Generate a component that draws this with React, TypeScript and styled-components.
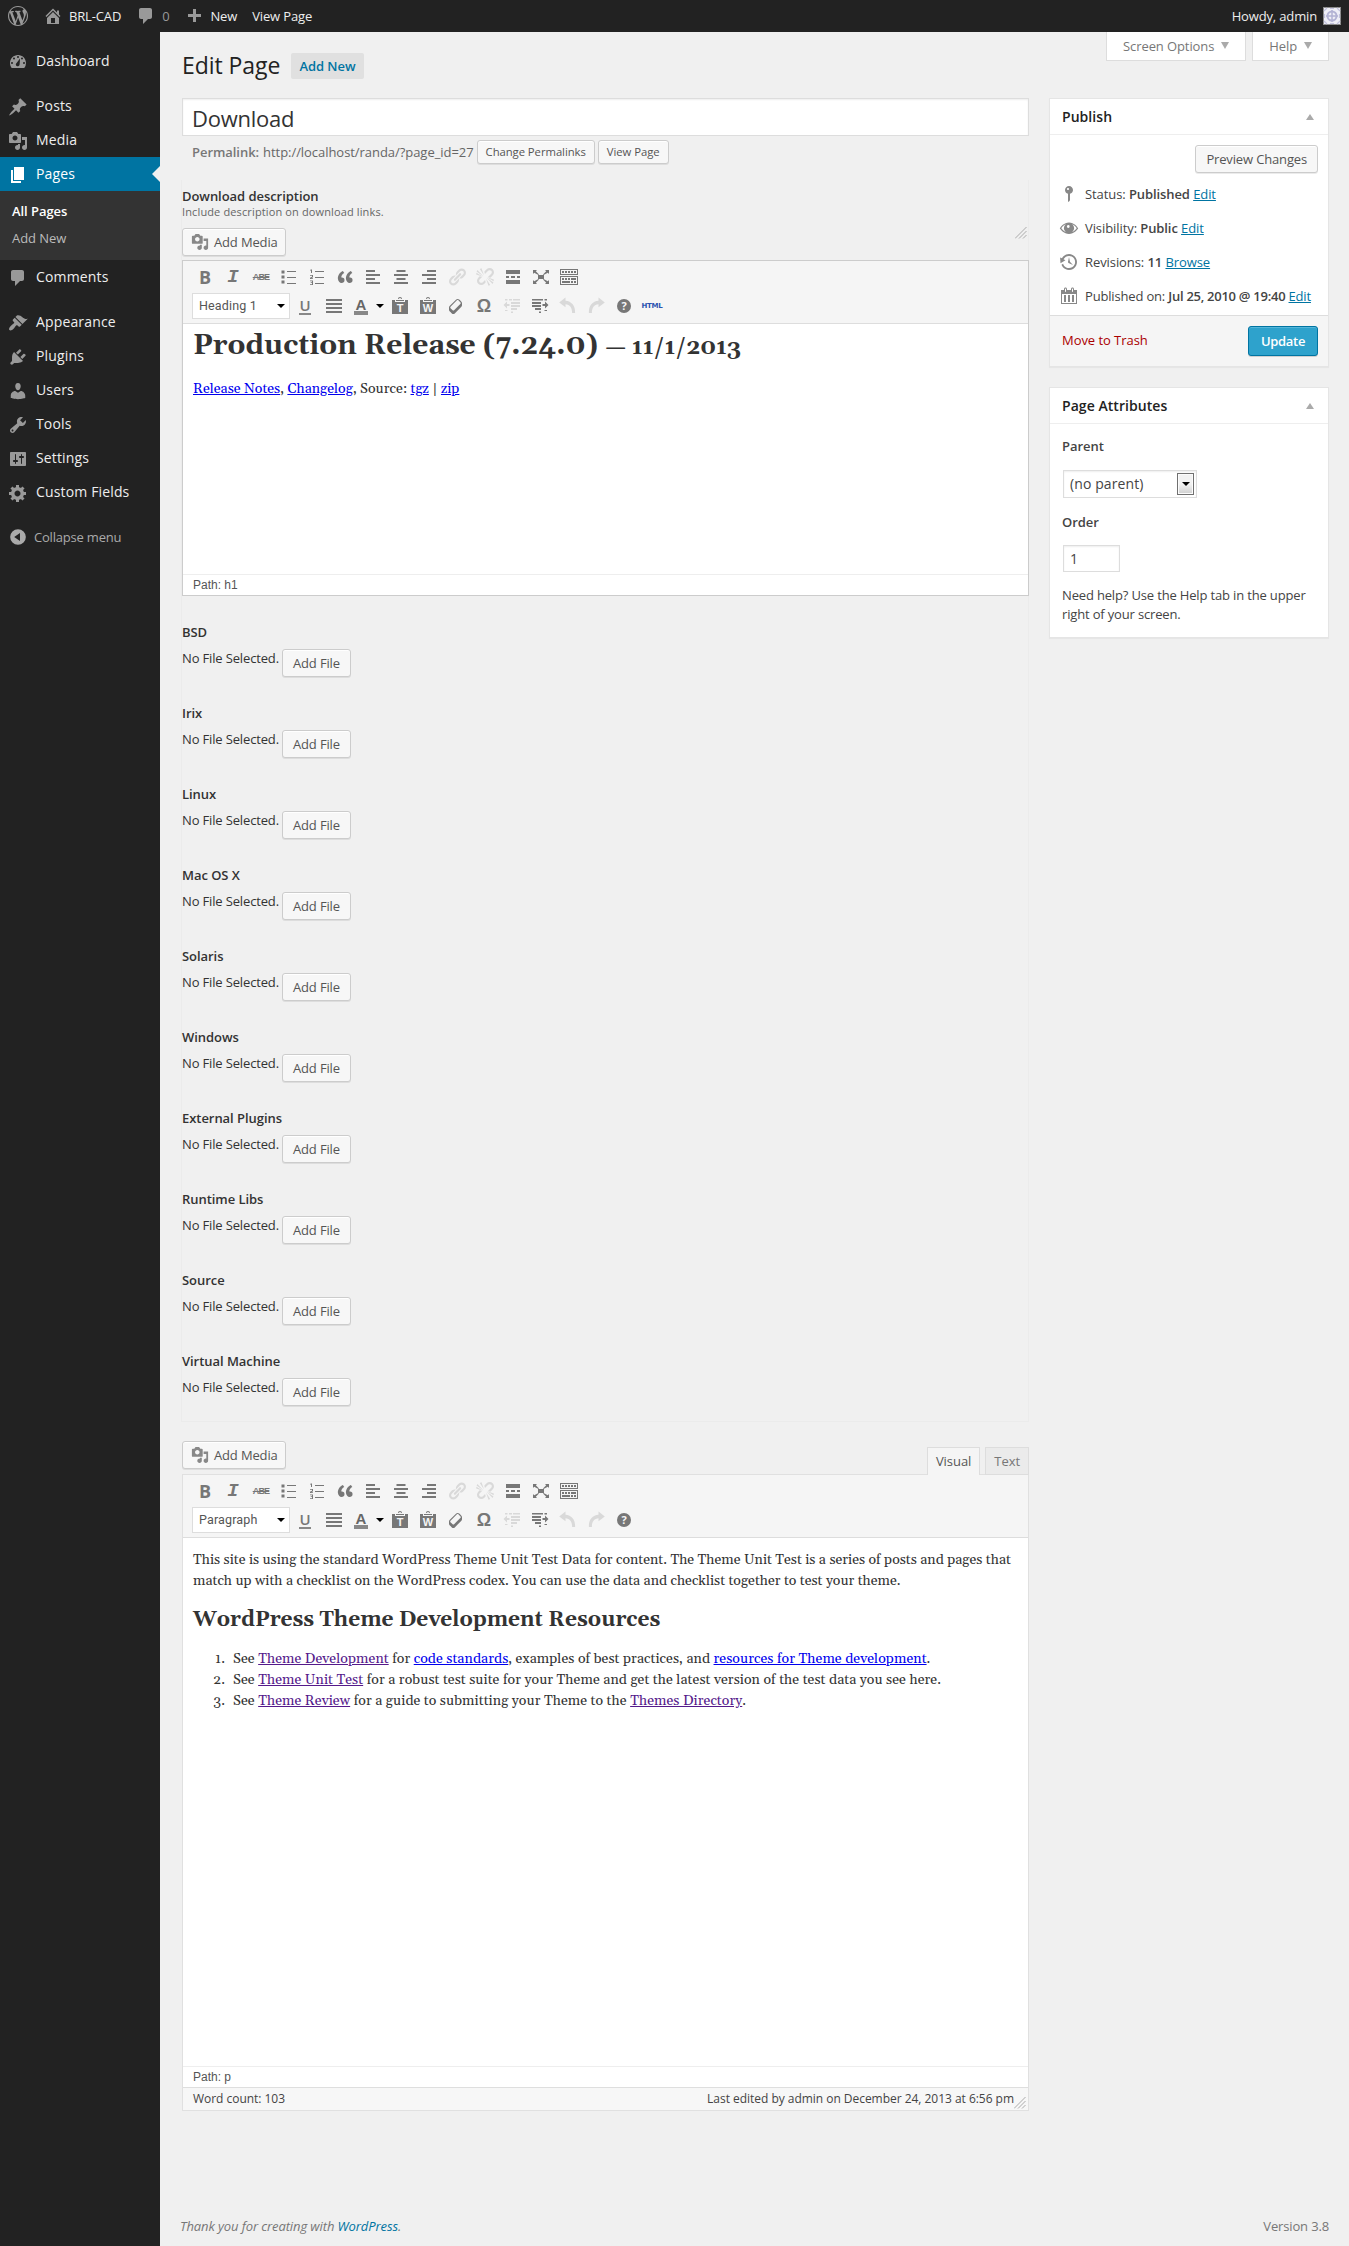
import React from 'react';
import styled, { createGlobalStyle, css } from 'styled-components';

const Global = createGlobalStyle`
  * { box-sizing: border-box; }
  body {
    margin: 0;
    background: #f0f0f0;
    color: #444;
    font: 13px/18px "Open Sans", sans-serif;
    letter-spacing: -0.05px;
  }
  h1, h2, h3, p, ul, ol { margin: 0; padding: 0; font-weight: normal; }
  ul, ol { list-style: none; }
`;

/* ---------- icons ---------- */

const PATHS = {
  wordpress:
    'M20 10c0-5.51-4.49-10-10-10C4.48 0 0 4.49 0 10c0 5.52 4.48 10 10 10 5.51 0 10-4.48 10-10zM7.78 15.37L4.37 6.22c.55-.02 1.17-.08 1.17-.08.5-.06.44-1.13-.06-1.11 0 0-1.45.11-2.37.11-.18 0-.37 0-.58-.01C4.12 2.69 6.87 1.11 10 1.11c2.33 0 4.45.87 6.05 2.34-.68-.11-1.65.39-1.65 1.58 0 .74.45 1.36.9 2.1.35.61.55 1.36.55 2.46 0 1.49-1.4 5-1.4 5l-3.03-8.37c.54-.02.82-.17.82-.17.5-.05.44-1.25-.06-1.22 0 0-1.44.12-2.38.12-.87 0-2.33-.12-2.33-.12-.5-.03-.56 1.2-.06 1.22l.92.08 1.26 3.41zM17.41 10c.24-.64.74-1.87.43-4.25.7 1.29 1.05 2.71 1.05 4.25 0 3.29-1.73 6.24-4.4 7.78.97-2.59 1.94-5.2 2.92-7.78zM6.1 18.09C3.12 16.65 1.11 13.53 1.11 10c0-1.3.23-2.48.72-3.59C3.25 10.3 4.67 14.2 6.1 18.09zm4.03-6.63l2.58 6.98c-.86.29-1.76.45-2.71.45-.79 0-1.57-.11-2.29-.33.81-2.38 1.62-4.74 2.42-7.1z',
  home: 'M16 8.5l1.53 1.53-1.06 1.06L10 4.6l-6.47 6.49-1.06-1.06L10 2.5l4 4v-2h2v4zm-6-2.46l6 5.99V18H4v-5.97zM12 17v-5H8v5h4z',
  comments: 'M5 2h9c1.1 0 2 .9 2 2v7c0 1.1-.9 2-2 2h-2l-5 5v-5H5c-1.1 0-2-.9-2-2V4c0-1.1.9-2 2-2z',
  plus: 'M17 8v3h-5v5H9v-5H4V8h5V3h3v5z',
  dashboard:
    'M3.76 16h12.48A8 8 0 0 0 18 11.01C18 6.59 14.42 3 10 3S2 6.59 2 11.01C2 12.91 2.66 14.66 3.76 16zM10 4a1 1 0 1 1 0 2 1 1 0 0 1 0-2zM6 5.500a1 1 0 1 1 0 2 1 1 0 0 1 0-2zm8 0a1 1 0 1 1 0 2 1 1 0 0 1 0-2zM4 10a1 1 0 1 1 0 2 1 1 0 0 1 0-2zm12 0a1 1 0 1 1 0 2 1 1 0 0 1 0-2zm-4-3.500s-.2 5.200-.4 6.100a1.900 1.900 0 1 1-3-1.700z',
  post: 'M10.44 3.02l1.82-1.82 6.36 6.35-1.83 1.82c-1.05-.68-2.48-.57-3.41.36l-.75.75c-.92.93-1.04 2.35-.35 3.41l-1.83 1.82-2.41-2.41-2.8 2.79c-.42.42-3.38 2.71-3.8 2.29s1.86-3.39 2.28-3.81l2.79-2.79L4.1 9.36l1.83-1.82c1.05.69 2.48.57 3.4-.36l.75-.75c.93-.92 1.05-2.35.36-3.41z',
  media:
    'M13 11V4c0-.55-.45-1-1-1h-1.670L9 1H5L3.670 3H2c-.55 0-1 .45-1 1v7c0 .55.45 1 1 1h10c.55 0 1-.45 1-1zM7 4.500c1.380 0 2.500 1.120 2.500 2.500S8.380 9.500 7 9.500 4.500 8.380 4.500 7 5.620 4.500 7 4.500zM14 6h5v10.500c0 1.380-1.120 2.500-2.500 2.500S14 17.880 14 16.500s1.120-2.500 2.500-2.500c.17 0 .34.02.5.05V9h-3V6zm-4 8.050V13h2v3.500c0 1.380-1.120 2.500-2.500 2.500S7 17.880 7 16.500 8.120 14 9.500 14c.17 0 .34.02.5.05z',
  page: 'M6 15V2h10v13H6zm-1 1h8v2H3V5h2v11z',
  appearance:
    'M14.48 11.06L7.41 3.99l1.5-1.5c.5-.56 2.3-.47 3.51.32 1.21.8 1.43 1.28 2.91 2.1 1.18.64 2.45 1.26 4.45.85zm-.71.71L6.7 4.7 4.93 6.47c-.39.39-.39 1.02 0 1.41l1.06 1.06c.39.39.39 1.03 0 1.42-.6.6-1.43 1.11-2.21 1.69-.35.26-.7.53-1.01.84C1.43 14.23.4 16.08 1.4 17.07c.99 1 2.84-.03 4.18-1.36.31-.31.58-.66.85-1.02.57-.78 1.08-1.61 1.69-2.21.39-.39 1.02-.39 1.41 0l1.06 1.06c.39.39 1.02.39 1.41 0z',
  plugins:
    'M13.11 4.36L9.87 7.6 8 5.73l3.24-3.24c.35-.34 1.05-.2 1.56.32.52.51.66 1.21.31 1.55zm-8 1.77l.91-1.12 9.01 9.01-1.19.84c-.71.71-2.63 1.16-3.82 1.16H6.14L4.9 17.26c-.59.59-1.54.59-2.12 0-.59-.58-.59-1.53 0-2.12l1.24-1.24v-3.88c0-1.13.4-3.19 1.09-3.89zm7.26 3.97l3.24-3.24c.34-.35 1.04-.21 1.55.31.52.51.66 1.21.31 1.55l-3.24 3.25z',
  users:
    'M10 9.250c-2.270 0-2.730-3.440-2.730-3.440C7 4.020 7.820 2 9.970 2c2.160 0 2.980 2.020 2.710 3.810 0 0-.41 3.440-2.680 3.440zm0 2.570L12.720 10c2.390 0 4.520 2.330 4.520 4.530v2.490s-3.650 1.130-7.240 1.130c-3.650 0-7.240-1.130-7.240-1.130v-2.490c0-2.250 1.940-4.480 4.470-4.480z',
  tools:
    'M16.68 9.77c-1.34 1.34-3.3 1.67-4.95.99l-5.41 6.52c-.99.99-2.59.99-3.58 0s-.99-2.59 0-3.57l6.52-5.42c-.68-1.65-.35-3.61.99-4.95 1.28-1.28 3.12-1.62 4.72-1.06l-2.89 2.89 2.82 2.82 2.86-2.87c.53 1.58.18 3.39-1.08 4.65zM3.81 16.21c.4.39 1.04.39 1.43 0 .4-.4.4-1.04 0-1.43-.39-.4-1.03-.4-1.43 0-.39.39-.39 1.03 0 1.43z',
  settings:
    'M18 16V4c0-.55-.45-1-1-1H3c-.55 0-1 .45-1 1v12c0 .55.45 1 1 1h14c.55 0 1-.45 1-1zM8 11h1c.55 0 1 .45 1 1s-.45 1-1 1H8v1.5c0 .28-.22.5-.5.5s-.5-.22-.5-.5V13H6c-.55 0-1-.45-1-1s.45-1 1-1h1V5.5c0-.28.22-.5.5-.5s.5.22.5.5V11zm5-2h-1c-.55 0-1-.45-1-1s.45-1 1-1h1V5.5c0-.28.22-.5.5-.5s.5.22.5.5V7h1c.55 0 1 .45 1 1s-.45 1-1 1h-1v5.5c0 .28-.22.5-.5.5s-.5-.22-.5-.5V9z',
  generic:
    'M18 12h-2.18c-.17.7-.44 1.35-.81 1.93l1.54 1.54-2.1 2.1-1.54-1.54c-.58.36-1.23.63-1.91.79V19H8v-2.180c-.68-.16-1.330-.43-1.910-.79l-1.540 1.540-2.120-2.120 1.540-1.540c-.36-.58-.63-1.230-.79-1.910H1V9.030h2.170c.16-.7.44-1.350.8-1.940L2.430 5.550l2.100-2.100 1.540 1.540c.58-.37 1.240-.64 1.930-.81V2h3v2.180c.68.16 1.330.43 1.910.79l1.540-1.540 2.120 2.120-1.540 1.540c.36.59.64 1.240.8 1.940H18V12zm-8.500 1.500c1.660 0 3-1.340 3-3s-1.340-3-3-3-3 1.340-3 3 1.340 3 3 3z',
  collapse: 'M10 2.160a7.840 7.840 0 1 1 0 15.680 7.840 7.840 0 0 1 0-15.680zm2 11.720V6.120L6.180 9.970z',
  status:
    'M14 6c0 1.860-1.280 3.410-3 3.860V16c0 1-2 2-2 2V9.860c-1.720-.45-3-2-3-3.860 0-2.210 1.790-4 4-4s4 1.790 4 4zM8 5c0 .55.45 1 1 1s1-.45 1-1-.45-1-1-1-1 .45-1 1z',
  visibility:
    'M10 4.400c5 0 8.300 4.400 9.200 5.800-.9 1.400-4.200 5.800-9.200 5.800S1.700 11.600.8 10.200C1.700 8.800 5 4.400 10 4.400zm-3.200 1.900C4.700 7.200 3.200 8.900 2.300 10.200c.9 1.300 2.400 3 4.500 3.900a4.900 4.900 0 0 1 0-7.800zm6.400 0a4.900 4.900 0 0 1 0 7.800c2.100-.9 3.600-2.600 4.500-3.900-.9-1.300-2.400-3-4.500-3.900zM9.200 7.100a1.400 1.400 0 1 0 .1 2.800 1.400 1.400 0 0 0-.1-2.800z',
  backup:
    'M13.65 2.88c3.93 2.01 5.48 6.84 3.47 10.77s-6.83 5.48-10.77 3.47c-1.87-.96-3.2-2.56-3.86-4.4l1.64-1.03c.45 1.57 1.52 2.95 3.08 3.76 3.01 1.54 6.69.35 8.23-2.66 1.55-3.01.36-6.69-2.65-8.24C9.78 3.01 6.1 4.2 4.56 7.21l1.88.97-4.95 3.08-.39-5.82 1.78.91C4.9 2.4 9.75.89 13.65 2.88zm-4.36 7.83C9.11 10.53 9 10.28 9 10c0-.07.03-.12.04-.19h-.01L10 5l.97 4.81L14 13l-4.500-2.120.02-.02c-.08-.04-.16-.09-.23-.15z',
  calendar:
    'M15 4h3v14H2V4h3V3c0-.83.67-1.5 1.5-1.500S8 2.170 8 3v1h4V3c0-.83.67-1.500 1.500-1.500S15 2.170 15 3v1zM6 3v2.500c0 .28.22.5.5.5s.5-.22.5-.5V3c0-.28-.22-.5-.5-.5S6 2.720 6 3zm7 0v2.500c0 .28.22.5.5.5s.5-.22.5-.5V3c0-.28-.22-.5-.5-.5s-.5.22-.5.5zm4 14V8H3v9h14zM7 16V9H5v7h2zm4 0V9H9v7h2zm4 0V9h-2v7h2z',
  bullets: 'M2.500 3.500h3v3h-3zM2.500 8.500h3v3h-3zM2.500 13.500h3v3h-3zM8 4h9v1H8zM8 10h9v1H8zM8 16h9v1H8z',
  numbers:
    'M8 4h9v1H8zM8 10h9v1H8zM8 16h9v1H8zM4 2.500h1V6H4V3.500H3V3zM3 8h3v2.300L4.300 11.200H6v.8H3v-1.300l2-1V8.800H3zM3 13.500h3V18H3v-.8h2v-1.100H3.700v-.8H5v-1H3z',
  quote:
    'M9.490 13.220c0-.74-.2-1.380-.61-1.900-.62-.78-1.830-.88-2.530-.72-.29-1.650 1.110-3.750 2.920-4.650L7.880 4c-2.730 1.300-5.420 4.280-4.960 8.050C3.210 14.430 4.590 16 6.540 16c.85 0 1.560-.25 2.120-.75s.83-1.180.83-2.030zm8.050 0c0-.74-.2-1.380-.61-1.900-.63-.78-1.830-.88-2.530-.72-.29-1.650 1.110-3.750 2.920-4.650L15.930 4c-2.730 1.300-5.410 4.280-4.950 8.050.29 2.380 1.660 3.950 3.610 3.950.85 0 1.560-.25 2.120-.75s.83-1.180.83-2.030z',
  left: 'M3 3h9v2H3zM3 7h14v2H3zM3 11h9v2H3zM3 15h14v2H3z',
  center: 'M5.500 3h9v2h-9zM3 7h14v2H3zM5.500 11h9v2h-9zM3 15h14v2H3z',
  right: 'M8 3h9v2H8zM3 7h14v2H3zM8 11h9v2H8zM3 15h14v2H3z',
  justify: 'M2 3h16v2H2zM2 7h16v2H2zM2 11h16v2H2zM2 15h16v2H2z',
  link: 'M17.74 2.76c1.68 1.69 1.68 4.41 0 6.1l-1.53 1.52c-1.12 1.12-2.7 1.47-4.14 1.09l2.62-2.61.76-.77.76-.76c.84-.84.84-2.2 0-3.04-.84-.85-2.2-.85-3.04 0l-.77.76-3.38 3.38c-.37-1.44-.02-3.02 1.1-4.14l1.52-1.53c1.69-1.68 4.42-1.68 6.1 0zM8.59 13.43l5.34-5.34c.42-.42.42-1.1 0-1.52-.44-.43-1.13-.39-1.53 0l-5.33 5.34c-.42.42-.42 1.1 0 1.52.44.43 1.13.39 1.52 0zm-.76 2.29l4.14-4.15c.38 1.44.03 3.02-1.09 4.14l-1.52 1.53c-1.69 1.68-4.41 1.68-6.1 0-1.68-1.68-1.68-4.42 0-6.1l1.53-1.52c1.12-1.12 2.7-1.47 4.14-1.1l-4.14 4.15c-.85.84-.85 2.2 0 3.05.84.84 2.2.84 3.04 0z',
  unlink:
    'M17.74 2.26c1.68 1.69 1.68 4.41 0 6.1l-1.53 1.52c-.32.33-.69.58-1.08.77L13 10l1.69-1.64.76-.77.76-.76c.84-.84.84-2.2 0-3.04-.84-.85-2.2-.85-3.04 0l-.77.76-.76.76L10 7l-.65-2.14c.19-.38.44-.75.77-1.07l1.52-1.53c1.69-1.68 4.42-1.68 6.1 0zM1.600 4.600l.8-1.500L8.500 9.500zM4.800 2.100l1.700-.9L9 8.500zM1.200 7.500l.2-1.800L8 9.800zM9.360 13.690L10 13l.74 2.35-1.38 1.39c-1.69 1.68-4.41 1.68-6.1 0-1.68-1.68-1.68-4.42 0-6.1l1.39-1.38L7 10l-.69.64-1.52 1.53c-.85.84-.85 2.2 0 3.04.84.85 2.2.85 3.04 0zM18.400 15.400l-.8 1.500L11.500 10.500zM15.200 17.900l-1.700.9L11 11.500zM18.800 12.500l-.2 1.800L12 10.200z',
  more: 'M17 7V3H3v4h14zM6 11V9H3v2h3zm6 0V9H8v2h4zm5 0V9h-3v2h3zm0 6v-4H3v4h14z',
  expand:
    'M7 8h6v4H7zM2 13v4h4l-1.200-1.200L8 12.600 7.400 12l-4.200 2.200zM14 17h4v-4l-1.200 1.200L12.600 12l-.6.6 3.200 3.200zM14 3l1.200 1.200L12 7.400l.6.6 4.200-2.200L18 7V3zM6 3H2v4l1.200-1.200L7.400 8l.6-.6-3.200-3.200z',
  kitchen:
    'M19 2v6H1V2h18zm-1 5V3H2v4h16zM5 4v2H3V4h2zm3 0v2H6V4h2zm3 0v2H9V4h2zm3 0v2h-2V4h2zm3 0v2h-2V4h2zm2 5v9H1V9h18zm-1 8v-7H2v7h16zM5 11v2H3v-2h2zm3 0v2H6v-2h2zm3 0v2H9v-2h2zm6 0v2h-5v-2h5zm-6 3v2H3v-2h8zm3 0v2h-2v-2h2zm3 0v2h-2v-2h2z',
  clipboard: 'M9 3h-3v2h8V3h-3a1 1 0 0 0-2 0zM8 3a2 2 0 0 1 4 0h2v1H6V3zM2 4h3v2h10V4h3v14H2z',
  eraser:
    'M14.29 4.59l1.1 1.11c.41.4.61.94.61 1.47v2.12c0 .53-.2 1.07-.61 1.47l-6.63 6.63c-.4.41-.94.61-1.47.61s-1.07-.2-1.47-.61l-1.11-1.1-1.1-1.11c-.41-.4-.61-.94-.61-1.47v-2.12c0-.54.2-1.07.61-1.48l6.63-6.62c.4-.41.94-.61 1.47-.61s1.06.2 1.47.61zm-6.21 9.7l6.42-6.42c.39-.39.39-1.03 0-1.43L12.36 4.3c-.19-.19-.45-.29-.72-.29s-.52.1-.71.29l-6.42 6.42c-.39.4-.39 1.04 0 1.43l2.14 2.14c.38.38 1.04.38 1.43 0z',
  outdent: 'M1.500 9L5 5.500v2.500h2.500v2H5v2.500zM7 3h3v1.500H7zM11 3h7v1.500h-7zM9 6h9v2H9zM9 9h9v2H9zM9 12h6v2H9zM3 3h2.500v1.500H3zM3 14h2.500v1H3zM9 15.500h2V17H9z',
  indent: 'M18.500 9L15 5.500v2.500h-2.500v2H15v2.500zM2 3h11v1.500H2zM2 6h9v2H2zM2 9h9v2H2zM5 12h6v2H5zM14.500 3h2.500v1.500h-2.500zM14.500 14h2.500v1h-2.500zM9 15.500h2V17H9z',
  undo: 'M7.500 1.500v3.200c6 .4 10 5 9.600 12.300h-3c.1-5.400-2.300-8.500-6.600-8.800v3.100L1.200 6.400z',
  redo: 'M12.500 1.500v3.200c-6 .4-10 5-9.600 12.300h3c-.1-5.400 2.300-8.500 6.600-8.800v3.100l6.300-4.900z',
};
type IconName = keyof typeof PATHS;

const Svg = styled.svg<{ $size?: number }>`
  display: block;
  flex: none;
  width: ${(p) => p.$size ?? 20}px;
  height: ${(p) => p.$size ?? 20}px;
  fill: currentColor;
`;

const Icon = ({ name, size }: { name: IconName; size?: number }) => (
  <Svg viewBox="0 0 20 20" $size={size} fillRule="evenodd" aria-hidden>
    <path d={PATHS[name]} />
  </Svg>
);

const GripSvg = styled.svg`
  display: block;
  width: 12px;
  height: 12px;
  fill: none;
  stroke: #aaa;
`;
const Grip = () => (
  <GripSvg viewBox="0 0 12 12" aria-hidden>
    <path d="M0 11.500L11.500 0M4 11.500L11.500 4M8 11.500L11.500 8" />
  </GripSvg>
);

/* ---------- admin bar ---------- */

const AdminBar = styled.header`
  display: flex;
  align-items: center;
  height: 32px;
  padding: 0 8px;
  background: #222;
  color: #eee;
  line-height: 32px;
  letter-spacing: -0.15px;
`;
const BarItem = styled.div<{ $gap?: number; $ml?: number; $muted?: boolean }>`
  display: flex;
  align-items: center;
  gap: ${(p) => p.$gap ?? 0}px;
  margin-left: ${(p) => p.$ml ?? 0}px;
  color: ${(p) => (p.$muted ? '#999' : '#eee')};
  white-space: nowrap;
  svg { color: #999; }
`;
const Spacer = styled.div`
  flex: 1;
`;
const AvatarSvg = styled.svg`
  display: block;
  width: 18px;
  height: 18px;
  margin-left: 6px;
`;
const Avatar = () => (
  <AvatarSvg viewBox="0 0 18 18" aria-hidden>
    <rect width="18" height="18" fill="#8c8c8c" />
    <rect x="1" y="1" width="16" height="16" fill="#eeeef6" />
    <circle cx="9" cy="9" r="4.500" fill="none" stroke="#b3b3d4" strokeWidth="2" />
    <path d="M9 3v12M3 9h12" stroke="#b3b3d4" strokeWidth="1.500" />
    <path
      d="M1 4l3-3M14 1l3 3M1 14l3 3M17 14l-3 3M7 1.500h4M7 16.500h4M1.500 7v4M16.500 7v4"
      stroke="#c3c3de"
      strokeWidth="1.200"
    />
  </AvatarSvg>
);

/* ---------- side menu ---------- */

const Body = styled.div`
  display: flex;
  height: 2214px;
`;
const Menu = styled.nav`
  width: 160px;
  flex: none;
  padding-top: 12px;
  background: #222;
`;
const MenuItem = styled.div<{ $active?: boolean; $gapBelow?: boolean }>`
  display: flex;
  align-items: center;
  justify-content: space-between;
  height: 34px;
  margin-bottom: ${(p) => (p.$gapBelow ? 11 : 0)}px;
  padding-left: 8px;
  font-size: 14px;
  letter-spacing: 0.15px;
  color: ${(p) => (p.$active ? '#fff' : '#eee')};
  background: ${(p) => (p.$active ? '#0074a2' : 'transparent')};
  svg { color: ${(p) => (p.$active ? '#fff' : '#999')}; }
`;
const MenuLabel = styled.span`
  display: flex;
  align-items: center;
  gap: 8px;
  svg { margin-top: 2px; }
`;
const MenuArrow = styled.span`
  border: 8px solid transparent;
  border-right-color: #f0f0f0;
  border-left: 0;
`;
const SubMenu = styled.ul`
  padding: 7px 12px 8px;
  background: #333;
  line-height: 27px;
  color: #bbb;
`;
const SubItem = styled.li<{ $current?: boolean }>`
  ${(p) => p.$current && css`color: #fff; font-weight: 600;`}
`;
const Collapse = styled.div`
  display: flex;
  align-items: center;
  gap: 6px;
  height: 33px;
  padding-left: 8px;
  color: #aaa;
  letter-spacing: -0.2px;
`;

/* ---------- content frame ---------- */

const Content = styled.main`
  display: flex;
  flex-direction: column;
  flex: 1;
  padding: 0 20px 10px 22px;
`;
const TopRow = styled.div`
  display: flex;
  justify-content: space-between;
  align-items: flex-start;
  height: 66px;
`;
const Title = styled.h1`
  display: flex;
  align-items: center;
  padding-top: 19px;
  font-size: 23px;
  line-height: 28px;
  color: #222;
`;
const AddNew = styled.a`
  margin: 2px 0 0 11px;
  padding: 0 8px;
  border-radius: 2px;
  background: #e0e0e0;
  color: #0074a2;
  font-size: 13px;
  font-weight: 600;
  line-height: 26px;
`;
const Tabs = styled.div`
  display: flex;
  gap: 6px;
`;
const ScreenTab = styled.div`
  display: flex;
  align-items: center;
  gap: 5px;
  height: 29px;
  padding: 0 13px 0 16px;
  border: 1px solid #ddd;
  border-top: 0;
  background: #fff;
  color: #777;
  letter-spacing: -0.1px;
`;
const TabCaret = styled.i`
  width: 0;
  margin: 0 3px 1px 2px;
  border: 4px solid transparent;
  border-top: 7px solid #aaa;
  border-bottom: 0;
`;
const Columns = styled.div`
  display: grid;
  grid-template-columns: 847px 280px;
  column-gap: 20px;
  align-items: start;
`;

/* ---------- left column ---------- */

const TitleField = styled.div`
  height: 38px;
  padding: 0 9px;
  border: 1px solid #ddd;
  background: #fff;
  box-shadow: inset 0 1px 2px rgba(0, 0, 0, 0.07);
  font-size: 22px;
  line-height: 38px;
  letter-spacing: -0.25px;
  color: #333;
`;
const PermalinkRow = styled.div`
  display: flex;
  align-items: center;
  height: 44px;
  padding: 0 0 12px 10px;
  color: #666;
  b { margin-right: 4px; font-weight: 600; color: #777; }
`;
const Button = styled.button<{ $small?: boolean }>`
  display: inline-flex;
  align-items: center;
  height: ${(p) => (p.$small ? 24 : 28)}px;
  padding: 0 ${(p) => (p.$small ? 8 : 10)}px 1px;
  border: 1px solid #ccc;
  border-radius: 3px;
  background: #f7f7f7;
  box-shadow: inset 0 1px 0 #fff, 0 1px 0 rgba(0, 0, 0, 0.08);
  color: #555;
  font: inherit;
  font-size: ${(p) => (p.$small ? 11.3 : 13)}px;
  letter-spacing: ${(p) => (p.$small ? -0.05 : -0.15)}px;
  white-space: nowrap;
`;
const SmallButton = styled(Button).attrs({ $small: true })`
  margin-left: 3px;
  padding-top: 1px;
`;
const MediaButton = styled(Button)`
  gap: 5px;
  padding: 0 7px 1px 8px;
  svg { color: #888; }
`;
const MetaBox = styled.section`
  height: 1242px;
  margin-left: -1px;
  border: 1px solid #ebebeb;
  border-top: 0;
`;
const FieldLabel = styled.div<{ $first?: boolean }>`
  padding-top: ${(p) => (p.$first ? 7 : 0)}px;
  font-size: 13px;
  font-weight: 600;
  line-height: 18px;
  color: #333;
`;
const FieldHint = styled.div`
  font-size: 11px;
  line-height: 13px;
  letter-spacing: 0.13px;
  color: #666;
`;
const EditorTools = styled.div`
  display: flex;
  justify-content: space-between;
  align-items: flex-end;
`;
const DescriptionTools = styled(EditorTools)`
  height: 38px;
  margin-bottom: 4px;
`;
const GripSlot = styled.div`
  height: 29px;
  width: 12px;
  margin-right: 1px;
`;
const Editor = styled.div<{ $border: string }>`
  display: flex;
  flex-direction: column;
  width: 847px;
  border: 1px solid ${(p) => p.$border};
  background: #fff;
`;
const Toolbar = styled.div`
  height: 63px;
  padding: 2px 9px 0;
  border-bottom: 1px solid #ddd;
  background: #f5f5f5;
  color: #777;
`;
const ToolRow = styled.div<{ $h: number; $shift?: number }>`
  display: flex;
  align-items: center;
  height: ${(p) => p.$h}px;
  margin-left: ${(p) => p.$shift ?? 0}px;
`;
const Tool = styled.span<{ $w?: number; $dim?: boolean }>`
  display: flex;
  align-items: center;
  justify-content: center;
  flex: none;
  width: ${(p) => p.$w ?? 28}px;
  height: 26px;
  color: ${(p) => (p.$dim ? '#d9d9d9' : '#777')};
`;
const Glyph = styled.span<{ $kind: 'bold' | 'italic' | 'strike' | 'under' | 'color' | 'omega' | 'html' }>`
  line-height: 18px;
  ${(p) =>
    ({
      bold: css`font: bold 18px/18px "Open Sans", sans-serif;`,
      italic: css`font: italic bold 19px/18px "Liberation Mono", monospace;`,
      strike: css`font: bold 9px/10px "Liberation Sans", sans-serif; letter-spacing: -0.8px; text-decoration: line-through;`,
      under: css`font: 600 15px/14px "Open Sans", sans-serif; border-bottom: 2px solid #888; padding: 0 0 1px;`,
      color: css`font: bold 15px/13px "Liberation Sans", sans-serif; color: #666; border-bottom: 4px solid #888; padding: 0 2px;`,
      omega: css`font: bold 18px/18px "Liberation Sans", sans-serif;`,
      html: css`font: bold 7px/10px "DejaVu Sans", sans-serif; color: #2a53b0; letter-spacing: -0.3px;`,
    })[p.$kind]}
`;
const HelpBadge = styled.span`
  width: 14px;
  height: 14px;
  border-radius: 50%;
  background: #777;
  color: #f5f5f5;
  font: bold 11px/14px "Open Sans", sans-serif;
  text-align: center;
`;
const PasteBox = styled.span`
  display: grid;
  svg, span { grid-area: 1 / 1; }
  span {
    z-index: 1;
    padding-top: 5px;
    text-align: center;
    color: #f5f5f5;
    font: bold 11px/14px "Liberation Sans", sans-serif;
  }
`;
const FormatSelect = styled.div`
  display: flex;
  align-items: center;
  justify-content: space-between;
  width: 98px;
  height: 26px;
  padding: 0 4px 0 6px;
  border: 1px solid #ddd;
  background: #fff;
  color: #555;
  font: 12.5px/24px Roboto, "Liberation Sans", sans-serif;
  letter-spacing: 0.15px;
`;
const BlackCaret = styled.i`
  width: 0;
  border: 4px solid transparent;
  border-top-color: #000;
  border-bottom: 0;
`;
const Page = styled.div<{ $h: number; $top: number }>`
  height: ${(p) => p.$h}px;
  padding: ${(p) => p.$top}px 9px 0 10px;
  color: #333;
  font: 14.08px/21px Gelasio, "Noto Serif", serif;
  letter-spacing: 0.01px;
`;
const PageH1 = styled.h1`
  font-size: 28.2px;
  font-weight: bold;
  line-height: 32px;
  small { font-size: 22.5px; }
`;
const PageH2 = styled.h2`
  margin: 14px 0;
  font-size: 21px;
  font-weight: bold;
  line-height: 29px;
`;
const PageP = styled.p<{ $mt?: number }>`
  margin-top: ${(p) => p.$mt ?? 0}px;
  white-space: nowrap;
`;
const PageOl = styled.ol`
  padding-left: 40px;
  white-space: nowrap;
  letter-spacing: 0.06px;
  counter-reset: step;
  li { counter-increment: step; }
  li::before {
    content: counter(step) '.';
    display: inline-block;
    width: 30px;
    margin: 0 8px 0 -38px;
    text-align: right;
  }
`;
const DocLink = styled.span<{ $visited?: boolean }>`
  color: ${(p) => (p.$visited ? '#551a8b' : '#0000ee')};
  text-decoration: underline;
`;
const PathBar = styled.div`
  height: 21px;
  padding: 0 10px;
  border-top: 1px solid #eee;
  color: #555;
  font: 12px/20px "Liberation Sans", sans-serif;
  letter-spacing: 0;
`;
const StatusBar = styled.div`
  display: flex;
  align-items: flex-end;
  height: 23px;
  padding: 0 2px 1px 10px;
  border-top: 1px solid #dedede;
  background: #f7f7f7;
  color: #444;
  font-size: 12px;
  line-height: 20px;
  letter-spacing: -0.03px;
`;
const FileList = styled.div`
  padding-top: 27px;
`;
const FileField = styled.div`
  height: 81px;
`;
const FileRow = styled.div`
  display: flex;
  align-items: flex-start;
  gap: 3px;
  margin-top: 7px;
  line-height: 20px;
  color: #333;
  span { width: 97px; letter-spacing: -0.15px; white-space: nowrap; }
  button { margin-top: 1px; }
`;
const MainEditor = styled.section`
  padding-top: 19px;
`;
const MainMedia = styled.div`
  padding-bottom: 5px;
`;
const EditorTabs = styled.div`
  display: flex;
  align-items: flex-end;
  gap: 5px;
  margin-bottom: -1px;
`;
const EditorTab = styled.div<{ $on?: boolean }>`
  height: 28px;
  padding: 0 8px;
  border: 1px solid #ddd;
  border-bottom: ${(p) => (p.$on ? 0 : '1px solid #ddd')};
  background: ${(p) => (p.$on ? '#f5f5f5' : '#ebebeb')};
  color: ${(p) => (p.$on ? '#555' : '#777')};
  line-height: 26px;
  z-index: 1;
`;

/* ---------- right column ---------- */

const Box = styled.section`
  margin-bottom: 20px;
  border: 1px solid #e5e5e5;
  background: #fff;
  box-shadow: 0 1px 1px rgba(0, 0, 0, 0.04);
`;
const BoxHead = styled.h3`
  display: flex;
  align-items: center;
  justify-content: space-between;
  height: 36px;
  padding: 0 14px 0 12px;
  border-bottom: 1px solid #eee;
  color: #222;
  font-size: 14px;
  font-weight: 600;
  letter-spacing: 0.05px;
`;
const UpCaret = styled.i`
  width: 0;
  border: 4px solid transparent;
  border-bottom: 6px solid #aaa;
  border-top: 0;
`;
const PreviewRow = styled.div`
  display: flex;
  justify-content: flex-end;
  height: 42px;
  padding: 10px 10px 0;
`;
const StatusRow = styled.div<{ $tight?: boolean }>`
  display: flex;
  align-items: center;
  gap: 6px;
  height: 34px;
  padding-left: 9px;
  white-space: nowrap;
  letter-spacing: ${(p) => (p.$tight ? -0.17 : -0.08)}px;
  svg { color: #888; }
  b { font-weight: 600; letter-spacing: ${(p) => (p.$tight ? -0.27 : -0.1)}px; }
`;
const BlueLink = styled.a<{ $plain?: boolean }>`
  color: #0074a2;
  text-decoration: ${(p) => (p.$plain ? 'none' : 'underline')};
`;
const BoxFoot = styled.div`
  display: flex;
  align-items: center;
  justify-content: space-between;
  height: 51px;
  margin-top: 2px;
  padding: 0 10px 2px 12px;
  border-top: 1px solid #ddd;
  background: #f5f5f5;
  color: #a00;
`;
const Primary = styled.button`
  width: 70px;
  height: 30px;
  margin-top: 2px;
  padding: 0 0 1px;
  border: 1px solid #0074a2;
  border-radius: 3px;
  background: #2ea2cc;
  box-shadow: inset 0 1px 0 rgba(120, 200, 230, 0.5), 0 1px 0 rgba(0, 0, 0, 0.15);
  color: #fff;
  font: inherit;
  font-weight: 600;
  letter-spacing: -0.3px;
`;
const Attributes = styled.div`
  height: 213px;
  padding: 13px 12px 0;
`;
const AttrLabel = styled.div`
  font-weight: 600;
  line-height: 18px;
`;
const ParentSelect = styled.div`
  display: flex;
  align-items: center;
  justify-content: space-between;
  width: 134px;
  height: 28px;
  margin: 15px 0 15px 1px;
  padding: 0 2px 0 6px;
  border: 1px solid #ddd;
  box-shadow: inset 0 1px 2px rgba(0, 0, 0, 0.07);
  font-size: 14px;
  letter-spacing: 0.1px;
`;
const SelectKnob = styled.span`
  display: flex;
  align-items: center;
  justify-content: center;
  width: 17px;
  height: 22px;
  border: 1px solid #707070;
  background: linear-gradient(#f2f2f2 50%, #cfcfcf);
  box-shadow: inset 0 0 0 1px #fcfcfc;
`;
const OrderInput = styled.div`
  width: 57px;
  height: 27px;
  margin: 14px 0 14px 1px;
  padding: 0 6px;
  border: 1px solid #ddd;
  box-shadow: inset 0 1px 2px rgba(0, 0, 0, 0.07);
  font-size: 14px;
  line-height: 26px;
`;
const HelpText = styled.p`
  line-height: 19px;
  letter-spacing: -0.16px;
  white-space: nowrap;
`;
const Footer = styled.footer`
  display: flex;
  justify-content: space-between;
  margin: auto 0 0 -2px;
  color: #777;
  line-height: 20px;
  letter-spacing: -0.15px;
  i { letter-spacing: -0.1px; }
`;

/* ---------- pieces ---------- */

type MenuEntry = [IconName, string, boolean?];

const MENU_TOP: MenuEntry[] = [
  ['dashboard', 'Dashboard', true],
  ['post', 'Posts'],
  ['media', 'Media'],
];
const MENU_BOTTOM: MenuEntry[] = [
  ['comments', 'Comments', true],
  ['appearance', 'Appearance'],
  ['plugins', 'Plugins'],
  ['users', 'Users'],
  ['tools', 'Tools'],
  ['settings', 'Settings'],
  ['generic', 'Custom Fields', true],
];
const ROW_ONE: [IconName, boolean?][] = [
  ['bullets'],
  ['numbers'],
  ['quote'],
  ['left'],
  ['center'],
  ['right'],
  ['link', true],
  ['unlink', true],
  ['more'],
  ['expand'],
  ['kitchen'],
];
const FILES = [
  'BSD',
  'Irix',
  'Linux',
  'Mac OS X',
  'Solaris',
  'Windows',
  'External Plugins',
  'Runtime Libs',
  'Source',
  'Virtual Machine',
];

const MenuEntries = ({ items }: { items: MenuEntry[] }) => (
  <>
    {items.map(([icon, label, gap]) => (
      <MenuItem key={label} $gapBelow={gap}>
        <MenuLabel>
          <Icon name={icon} />
          {label}
        </MenuLabel>
      </MenuItem>
    ))}
  </>
);

const Paste = ({ letter }: { letter: string }) => (
  <PasteBox>
    <Icon name="clipboard" />
    <span>{letter}</span>
  </PasteBox>
);

const EditorToolbar = ({ format, html }: { format: string; html?: boolean }) => (
  <Toolbar>
    <ToolRow $h={28} $shift={-1}>
      <Tool><Glyph $kind="bold">B</Glyph></Tool>
      <Tool><Glyph $kind="italic">I</Glyph></Tool>
      <Tool><Glyph $kind="strike">ABE</Glyph></Tool>
      {ROW_ONE.map(([name, dim]) => (
        <Tool key={name} $dim={dim}><Icon name={name} /></Tool>
      ))}
    </ToolRow>
    <ToolRow $h={30}>
      <FormatSelect>
        {format}
        <BlackCaret />
      </FormatSelect>
      <Tool $w={30}><Glyph $kind="under">U</Glyph></Tool>
      <Tool><Icon name="justify" /></Tool>
      <Tool $w={26}><Glyph $kind="color">A</Glyph></Tool>
      <Tool $w={12}><BlackCaret /></Tool>
      <Tool><Paste letter="T" /></Tool>
      <Tool><Paste letter="W" /></Tool>
      <Tool><Icon name="eraser" /></Tool>
      <Tool><Glyph $kind="omega">Ω</Glyph></Tool>
      <Tool $dim><Icon name="outdent" /></Tool>
      <Tool><Icon name="indent" /></Tool>
      <Tool $dim><Icon name="undo" /></Tool>
      <Tool $dim><Icon name="redo" /></Tool>
      <Tool><HelpBadge>?</HelpBadge></Tool>
      {html && <Tool><Glyph $kind="html">HTML</Glyph></Tool>}
    </ToolRow>
  </Toolbar>
);

const AddMedia = () => (
  <MediaButton>
    <Icon name="media" size={18} />
    Add Media
  </MediaButton>
);

export default function App() {
  return (
    <>
      <Global />
      <AdminBar>
        <BarItem><Icon name="wordpress" /></BarItem>
        <BarItem $ml={15} $gap={6}><Icon name="home" />BRL-CAD</BarItem>
        <BarItem $ml={15} $gap={6} $muted><Icon name="comments" />0</BarItem>
        <BarItem $ml={15} $gap={6}><Icon name="plus" />New</BarItem>
        <BarItem $ml={15}>View Page</BarItem>
        <Spacer />
        <BarItem>Howdy, admin<Avatar /></BarItem>
      </AdminBar>
      <Body>
        <Menu>
          <MenuEntries items={MENU_TOP} />
          <MenuItem $active>
            <MenuLabel><Icon name="page" />Pages</MenuLabel>
            <MenuArrow />
          </MenuItem>
          <SubMenu>
            <SubItem $current>All Pages</SubItem>
            <SubItem>Add New</SubItem>
          </SubMenu>
          <MenuEntries items={MENU_BOTTOM} />
          <Collapse><Icon name="collapse" />Collapse menu</Collapse>
        </Menu>
        <Content>
          <TopRow>
            <Title>Edit Page<AddNew>Add New</AddNew></Title>
            <Tabs>
              <ScreenTab>Screen Options <TabCaret /></ScreenTab>
              <ScreenTab>Help <TabCaret /></ScreenTab>
            </Tabs>
          </TopRow>
          <Columns>
            <div>
              <TitleField>Download</TitleField>
              <PermalinkRow>
                <b>Permalink:</b>
                <span>http://localhost/randa/?page_id=27</span>
                <SmallButton>Change Permalinks</SmallButton>
                <SmallButton>View Page</SmallButton>
              </PermalinkRow>
              <MetaBox>
                <FieldLabel $first>Download description</FieldLabel>
                <FieldHint>Include description on download links.</FieldHint>
                <DescriptionTools>
                  <AddMedia />
                  <GripSlot><Grip /></GripSlot>
                </DescriptionTools>
                <Editor $border="#ccc">
                  <EditorToolbar format="Heading 1" html />
                  <Page $h={250} $top={6}>
                    <PageH1>Production Release (7.24.0) <small>— 11/1/2013</small></PageH1>
                    <PageP $mt={15}>
                      <DocLink>Release Notes</DocLink>, <DocLink>Changelog</DocLink>, Source: <DocLink>tgz</DocLink> | <DocLink>zip</DocLink>
                    </PageP>
                  </Page>
                  <PathBar>Path: h1</PathBar>
                </Editor>
                <FileList>
                  {FILES.map((name) => (
                    <FileField key={name}>
                      <FieldLabel>{name}</FieldLabel>
                      <FileRow>
                        <span>No File Selected.</span>
                        <Button>Add File</Button>
                      </FileRow>
                    </FileField>
                  ))}
                </FileList>
              </MetaBox>
              <MainEditor>
                <EditorTools>
                  <MainMedia><AddMedia /></MainMedia>
                  <EditorTabs>
                    <EditorTab $on>Visual</EditorTab>
                    <EditorTab>Text</EditorTab>
                  </EditorTabs>
                </EditorTools>
                <Editor $border="#e0e0e0">
                  <EditorToolbar format="Paragraph" />
                  <Page $h={528} $top={12}>
                    <PageP>
                      This site is using the standard WordPress Theme Unit Test Data for content. The Theme Unit Test is a series of posts and pages that
                      <br />
                      match up with a checklist on the WordPress codex. You can use the data and checklist together to test your theme.
                    </PageP>
                    <PageH2>WordPress Theme Development Resources</PageH2>
                    <PageOl>
                      <li>
                        See <DocLink $visited>Theme Development</DocLink> for <DocLink>code standards</DocLink>, examples of best practices, and <DocLink>resources for Theme development</DocLink>.
                      </li>
                      <li>
                        See <DocLink $visited>Theme Unit Test</DocLink> for a robust test suite for your Theme and get the latest version of the test data you see here.
                      </li>
                      <li>
                        See <DocLink $visited>Theme Review</DocLink> for a guide to submitting your Theme to the <DocLink $visited>Themes Directory</DocLink>.
                      </li>
                    </PageOl>
                  </Page>
                  <PathBar>Path: p</PathBar>
                  <StatusBar>
                    Word count: 103
                    <Spacer />
                    Last edited by admin on December 24, 2013 at 6:56 pm
                    <Grip />
                  </StatusBar>
                </Editor>
              </MainEditor>
            </div>
            <div>
              <Box>
                <BoxHead>Publish<UpCaret /></BoxHead>
                <PreviewRow><Button>Preview Changes</Button></PreviewRow>
                <StatusRow><Icon name="status" /><span>Status: <b>Published</b> <BlueLink>Edit</BlueLink></span></StatusRow>
                <StatusRow><Icon name="visibility" /><span>Visibility: <b>Public</b> <BlueLink>Edit</BlueLink></span></StatusRow>
                <StatusRow><Icon name="backup" /><span>Revisions: <b>11</b> <BlueLink>Browse</BlueLink></span></StatusRow>
                <StatusRow $tight><Icon name="calendar" /><span>Published on: <b>Jul 25, 2010 @ 19:40</b> <BlueLink>Edit</BlueLink></span></StatusRow>
                <BoxFoot>Move to Trash<Primary>Update</Primary></BoxFoot>
              </Box>
              <Box>
                <BoxHead>Page Attributes<UpCaret /></BoxHead>
                <Attributes>
                  <AttrLabel>Parent</AttrLabel>
                  <ParentSelect>(no parent)<SelectKnob><BlackCaret /></SelectKnob></ParentSelect>
                  <AttrLabel>Order</AttrLabel>
                  <OrderInput>1</OrderInput>
                  <HelpText>Need help? Use the Help tab in the upper<br />right of your screen.</HelpText>
                </Attributes>
              </Box>
            </div>
          </Columns>
          <Footer>
            <i>Thank you for creating with <BlueLink $plain>WordPress</BlueLink>.</i>
            <span>Version 3.8</span>
          </Footer>
        </Content>
      </Body>
    </>
  );
}
